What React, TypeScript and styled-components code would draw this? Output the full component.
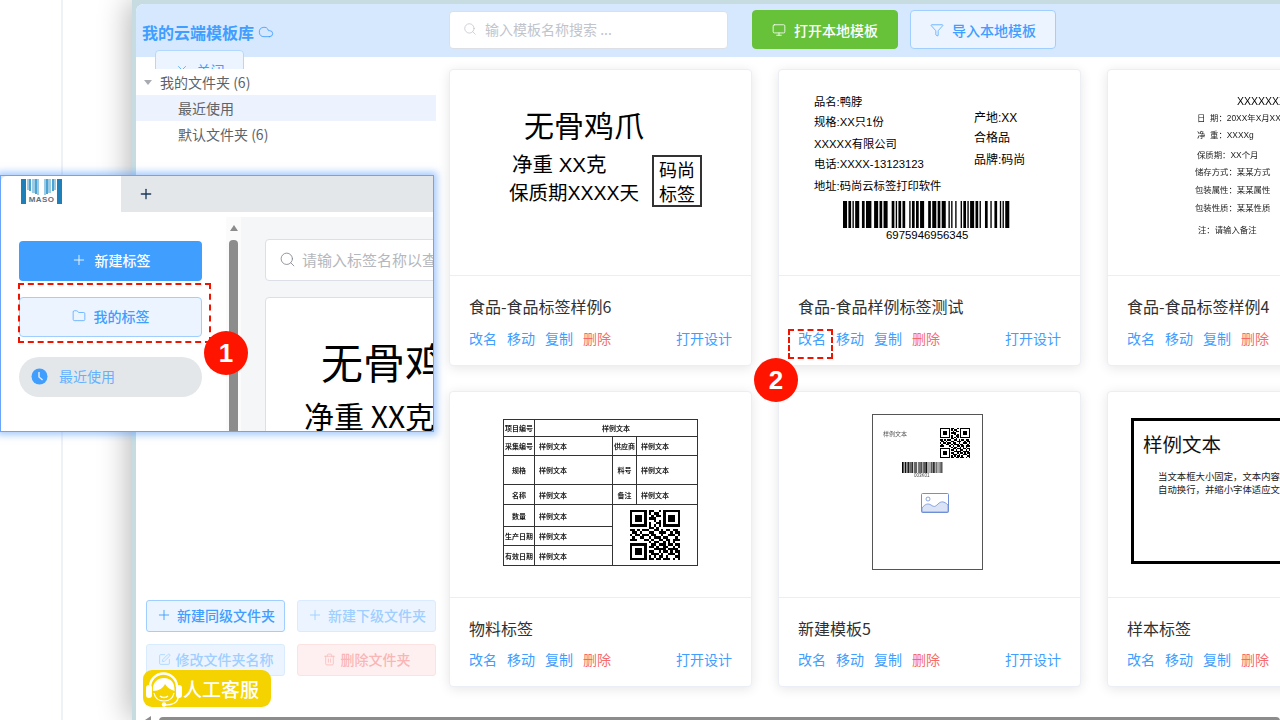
import type { ReactNode } from 'react';
import styled, { createGlobalStyle } from 'styled-components';
import { Cloud, Filter, Folder, Monitor, Plus, Search, SquarePen, Trash2, X } from 'lucide-react';

const GlobalStyle = createGlobalStyle`
  html, body {
    margin: 0;
    padding: 0;
    background: #ffffff;
    font-family: "Noto Sans CJK SC", "Noto Sans", sans-serif;
  }
  * {
    box-sizing: border-box;
  }
`;

const QR_ROWS = [
  '111111101100101111111',
  '100000101011001000001',
  '101110100101101011101',
  '101110101110001011101',
  '101110100010101011101',
  '100000101001101000001',
  '111111101010101111111',
  '000000001101000000000',
  '110101110011010110110',
  '011010001100111001011',
  '101101110110010011101',
  '010011001011101100010',
  '111000110100110110111',
  '000000001011001010100',
  '111111100110111011011',
  '100000101101001100101',
  '101110100011111011110',
  '101110101100101101011',
  '101110100111010011101',
  '100000101010110100011',
  '111111101101101110101',
];

const QrCode = ({ size }: { size: number }) => (
  <svg width={size} height={size} viewBox="0 0 21 21" shapeRendering="crispEdges">
    {QR_ROWS.flatMap((row, y) =>
      row.split('').map((cell, x) =>
        cell === '1' ? <rect key={`${x}-${y}`} x={x} y={y} width={1} height={1} fill="#000" /> : null,
      ),
    )}
  </svg>
);

const BAR_WIDTHS = [
  3, 1, 2, 1, 1, 1, 3, 2, 2, 1, 4, 2, 3, 1, 2, 1, 3, 3, 2, 1, 1, 1, 2, 1, 2, 3, 1, 1, 2, 1, 2, 1, 3, 3, 2, 1, 3, 1, 2,
  1, 3, 2, 1, 1, 1, 2, 1, 3, 1, 1, 2, 1, 1, 1, 3, 1, 2, 1, 1, 3, 2, 2, 1, 2, 2, 2, 1, 1, 1, 1, 3, 2,
];

const Barcode = ({ width, height }: { width: number; height: number }) => {
  const total = BAR_WIDTHS.reduce((sum, w) => sum + w, 0);
  let x = 0;
  return (
    <svg width={width} height={height} viewBox={`0 0 ${total} 10`} preserveAspectRatio="none">
      {BAR_WIDTHS.map((w, i) => {
        const bar = i % 2 === 0 ? <rect key={i} x={x} y={0} width={w} height={10} fill="#000" /> : null;
        x += w;
        return bar;
      })}
    </svg>
  );
};

const Logo = () => (
  <svg width="41" height="25" viewBox="0 0 41 25">
    <rect x="0" y="0" width="41" height="25" fill="#fff" />
    <rect x="0" y="0" width="5" height="25" fill="#1f7fb8" />
    <rect x="36" y="0" width="5" height="25" fill="#1f7fb8" />
    <path d="M6 0h2v11h-2zM11 0h3v14h-3zM16 0h2v16h-2zM23 0h2v16h-2zM27 0h3v14h-3zM33 0h2v11h-2z" fill="#9ccbe6" />
    <path d="M8 0h2v12h-2zM14 0h2v15h-2zM25 0h2v15h-2zM31 0h2v12h-2z" fill="#4ba3d3" />
    <text x="20.5" y="23" textAnchor="middle" fontSize="8" fontWeight="700" letterSpacing="0.4" fill="#5f6f7c" fontFamily="Liberation Sans">
      MASO
    </text>
  </svg>
);

const Headset = () => (
  <svg width="38" height="37" viewBox="0 0 38 37">
    <path d="M6 17a13.5 13.5 0 0 1 27 0" fill="none" stroke="#fff" strokeWidth="2.4" />
    <rect x="2" y="15" width="6" height="13" rx="3" fill="#fff" />
    <rect x="32" y="15" width="6" height="13" rx="3" fill="#fff" />
    <path d="M9 21C8 12 14 8 20 8c7 0 11 5 10.5 13-3-1-7-3-9.5-7-2 4-6 7-12 7z" fill="#fff" />
    <path d="M10 23c1 5 5 8 10 8s9-3 10-8" fill="none" stroke="#fff" strokeWidth="1.2" />
    <path d="M16 26c2 2 6 2 8 0" fill="none" stroke="#fff" strokeWidth="1.3" />
    <path d="M34 27c0 5-5 8-13 8" fill="none" stroke="#fff" strokeWidth="1.5" />
    <circle cx="20" cy="34.5" r="2.2" fill="#fff" />
  </svg>
);

const Page = styled.div`
  position: relative;
  display: flex;
  width: 1280px;
  height: 720px;
  overflow: hidden;
  background: #ffffff;
`;

const Rail = styled.div`
  flex: none;
  width: 132px;
`;

const RailColumn = styled.div`
  width: 63px;
  height: 100%;
  border-right: 2px solid #eef1f6;
`;

const Main = styled.div`
  position: relative;
  flex: 1;
  min-width: 0;
  padding: 4px 0 0 4px;
  background: #c6dce0;
  box-shadow: -4px 0 28px rgba(0, 0, 0, 0.28);
`;

const Panel = styled.div`
  position: relative;
  display: flex;
  flex-direction: column;
  height: 100%;
  overflow: hidden;
  background: #ffffff;
  border-radius: 8px 0 0 0;
`;

const Header = styled.header`
  flex: none;
  display: flex;
  align-items: center;
  height: 53px;
  padding-bottom: 2px;
  background: #d6e8fd;
`;

const TitleBlock = styled.div`
  display: flex;
  align-items: center;
  gap: 4px;
  width: 313px;
  padding: 5px 0 0 6px;
  color: #409eff;
  font-size: 16px;
  font-weight: 700;
`;

const SearchBox = styled.div`
  display: flex;
  align-items: center;
  gap: 8px;
  width: 279px;
  height: 38px;
  margin-right: 24px;
  padding: 0 0 2px 13px;
  background: #ffffff;
  border: 1px solid #dcdfe6;
  border-radius: 4px;
  color: #c0c4cc;
  font-size: 14px;
`;

const HeaderButton = styled.div<{ $green?: boolean }>`
  display: flex;
  align-items: center;
  justify-content: center;
  gap: 8px;
  width: 146px;
  height: 39px;
  margin-right: 12px;
  border-radius: 4px;
  border: 1px solid ${({ $green }) => ($green ? '#67c23a' : '#a0cfff')};
  background: ${({ $green }) => ($green ? '#67c23a' : '#ecf5ff')};
  color: ${({ $green }) => ($green ? '#ffffff' : '#409eff')};
  font-size: 14px;
  font-weight: 500;
`;

const CloseButton = styled.div`
  position: absolute;
  top: 46px;
  left: 19px;
  display: flex;
  align-items: center;
  justify-content: center;
  gap: 8px;
  width: 89px;
  height: 40px;
  background: #ecf5ff;
  border: 1px solid #b3d8ff;
  border-radius: 4px;
  color: #409eff;
  font-size: 14px;
`;

const Body = styled.div`
  flex: 1;
  min-height: 0;
  display: flex;
  padding-top: 12px;
`;

const Sidebar = styled.aside`
  position: relative;
  z-index: 1;
  flex: none;
  display: flex;
  flex-direction: column;
  justify-content: space-between;
  width: 300px;
  padding: 0 0 44px;
  background: #ffffff;
`;

const Tree = styled.div`
  display: flex;
  flex-direction: column;
`;

const TreeRow = styled.div<{ $child?: boolean; $active?: boolean }>`
  display: flex;
  align-items: center;
  gap: 8px;
  height: 26px;
  padding-left: ${({ $child }) => ($child ? '42px' : '8px')};
  background: ${({ $active }) => ($active ? '#ecf3fe' : 'transparent')};
  color: #606266;
  font-size: 14px;
`;

const Caret = styled.span`
  width: 0;
  height: 0;
  border-left: 4.5px solid transparent;
  border-right: 4.5px solid transparent;
  border-top: 5px solid #a8abb2;
`;

const FolderActions = styled.div`
  display: grid;
  grid-template-columns: 139px 139px;
  gap: 12px;
  padding-left: 10px;
`;

type Tone = 'primary' | 'muted' | 'danger';

const toneColors: Record<Tone, { bg: string; border: string; color: string }> = {
  primary: { bg: '#ecf5ff', border: '#a0cfff', color: '#409eff' },
  muted: { bg: '#ecf5ff', border: '#d9ecff', color: '#a0cfff' },
  danger: { bg: '#fef0f0', border: '#fde2e2', color: '#fab6b6' },
};

const FolderButton = styled.div<{ $tone: Tone }>`
  display: flex;
  align-items: center;
  justify-content: center;
  gap: 5px;
  height: 32px;
  padding-bottom: 2px;
  border-radius: 3px;
  border: 1px solid ${({ $tone }) => toneColors[$tone].border};
  background: ${({ $tone }) => toneColors[$tone].bg};
  color: ${({ $tone }) => toneColors[$tone].color};
  font-size: 14px;
  font-weight: 500;
`;

const ActionRow = styled.div`
  display: flex;
  gap: 10px;
  height: 20px;
  line-height: 20px;
  font-size: 14px;
`;

const CardGrid = styled.div`
  flex: none;
  display: grid;
  grid-template-columns: repeat(3, 303px);
  grid-template-rows: 297px 296px;
  column-gap: 26px;
  row-gap: 25px;
  margin-left: 13px;
`;

const Card = styled.article`
  display: flex;
  flex-direction: column;
  background: #ffffff;
  border: 1px solid #ebeef5;
  border-radius: 4px;
  box-shadow: 0 2px 12px rgba(0, 0, 0, 0.1);

  &:nth-child(n + 4) ${ActionRow} {
    margin-top: -1px;
  }
`;

const Preview = styled.div`
  flex: none;
  height: 207px;
  margin: -1px -1px 0;
  overflow: hidden;
  border-bottom: 1px solid #ebeef5;
`;

const Art = styled.div<{ $soft?: boolean }>`
  position: relative;
  height: 100%;
  filter: ${({ $soft }) => ($soft ? 'blur(0.35px)' : 'none')};
`;

const CardFooter = styled.div`
  display: flex;
  flex-direction: column;
  gap: 12px;
  padding: 20px 19px 0;
`;

const CardTitle = styled.div`
  height: 20px;
  line-height: 20px;
  color: #303133;
  font-size: 16px;
  white-space: nowrap;
`;

const ActionLink = styled.a<{ $danger?: boolean; $end?: boolean }>`
  color: ${({ $danger }) => ($danger ? '#f56c6c' : '#409eff')};
  margin-left: ${({ $end }) => ($end ? 'auto' : '0')};
  white-space: nowrap;
`;

/* text and marks on a label are placed on the label's own canvas */
const LabelText = styled.span<{ $x: number; $y: number; $size: number; $color?: string }>`
  position: absolute;
  left: ${({ $x }) => $x}px;
  top: ${({ $y }) => $y}px;
  transform: translateY(-50%);
  color: ${({ $color }) => $color ?? '#000000'};
  font-family: "Liberation Sans", "Noto Sans CJK SC", sans-serif;
  font-size: ${({ $size }) => $size}px;
  line-height: 1;
  white-space: nowrap;
`;

const LabelMark = styled.div<{ $x: number; $y: number }>`
  position: absolute;
  left: ${({ $x }) => $x}px;
  top: ${({ $y }) => $y}px;
  display: flex;
`;

const StampBox = styled.div`
  position: absolute;
  left: 203px;
  top: 86px;
  width: 50px;
  height: 52px;
  border: 2px solid #333333;
  color: #000000;
  font-size: 18px;
  line-height: 24px;
  text-align: center;
`;

const Paper = styled.div`
  position: absolute;
  left: 94px;
  top: 23px;
  width: 111px;
  height: 156px;
  border: 1px solid #555555;
`;

const FrameLabel = styled.div`
  position: absolute;
  left: 24px;
  top: 27px;
  width: 300px;
  height: 146px;
  border: 3px solid #000000;
`;

const SpecTable = styled.div`
  position: absolute;
  left: 54px;
  top: 28px;
  display: grid;
  grid-template-columns: 31px 78px 24px 61px;
  grid-template-rows: 17px 19px 29px 20px 22px 19px 20px;
  width: 195px;
  border-top: 1px solid #333333;
  border-left: 1px solid #333333;
  font-size: 7px;
  font-weight: 700;
  color: #222222;
`;

const SpecCell = styled.div<{ $span?: number; $rows?: number; $center?: boolean }>`
  display: flex;
  align-items: center;
  justify-content: ${({ $center }) => ($center ? 'center' : 'flex-start')};
  padding-left: ${({ $center }) => ($center ? '0' : '4px')};
  grid-column: span ${({ $span }) => $span ?? 1};
  grid-row: span ${({ $rows }) => $rows ?? 1};
  border-right: 1px solid #333333;
  border-bottom: 1px solid #333333;
  white-space: nowrap;
  overflow: hidden;
`;

const PreviewFood = () => (
  <>
    <LabelText $x={75} $y={58} $size={30}>无骨鸡爪</LabelText>
    <LabelText $x={63} $y={96} $size={20.5}>净重 XX克</LabelText>
    <LabelText $x={60} $y={125} $size={19.5}>保质期XXXX天</LabelText>
    <StampBox>码尚<br />标签</StampBox>
  </>
);

const PreviewDuck = () => (
  <>
    <LabelText $x={36} $y={34} $size={11.3}>品名:鸭脖</LabelText>
    <LabelText $x={36} $y={54} $size={11.3}>规格:XX只1份</LabelText>
    <LabelText $x={36} $y={76} $size={11.3}>XXXXX有限公司</LabelText>
    <LabelText $x={36} $y={96} $size={11.3}>电话:XXXX-13123123</LabelText>
    <LabelText $x={36} $y={118} $size={11.3}>地址:码尚云标签打印软件</LabelText>
    <LabelText $x={196} $y={49} $size={12}>产地:XX</LabelText>
    <LabelText $x={196} $y={69} $size={12}>合格品</LabelText>
    <LabelText $x={196} $y={91} $size={12}>品牌:码尚</LabelText>
    <LabelMark $x={65} $y={132}><Barcode width={169} height={27} /></LabelMark>
    <LabelText $x={108} $y={167} $size={11.4}>6975946956345</LabelText>
  </>
);

const PreviewSpec = () => (
  <>
    <LabelText $x={130} $y={32} $size={10.5}>XXXXXXXX</LabelText>
    <LabelText $x={90} $y={49} $size={8.4} $color="#222">日&nbsp;&nbsp;期：20XX年X月XX日</LabelText>
    <LabelText $x={90} $y={66} $size={8.4} $color="#222">净&nbsp;&nbsp;重：XXXXg</LabelText>
    <LabelText $x={90} $y={86} $size={8.4} $color="#222">保质期：XX个月</LabelText>
    <LabelText $x={88} $y={103} $size={8.4} $color="#222">储存方式：某某方式</LabelText>
    <LabelText $x={88} $y={121} $size={8.4} $color="#222">包装属性：某某属性</LabelText>
    <LabelText $x={88} $y={139} $size={8.4} $color="#222">包装性质：某某性质</LabelText>
    <LabelText $x={91} $y={161} $size={8.4} $color="#222">注：请输入备注</LabelText>
  </>
);

const PreviewMaterial = () => (
  <SpecTable>
    <SpecCell $center>项目编号</SpecCell>
    <SpecCell $span={3} $center>样例文本</SpecCell>
    <SpecCell $center>采集编号</SpecCell>
    <SpecCell>样例文本</SpecCell>
    <SpecCell $center>供应商</SpecCell>
    <SpecCell>样例文本</SpecCell>
    <SpecCell $center>规格</SpecCell>
    <SpecCell>样例文本</SpecCell>
    <SpecCell $center>料号</SpecCell>
    <SpecCell>样例文本</SpecCell>
    <SpecCell $center>名称</SpecCell>
    <SpecCell>样例文本</SpecCell>
    <SpecCell $center>备注</SpecCell>
    <SpecCell>样例文本</SpecCell>
    <SpecCell $center>数量</SpecCell>
    <SpecCell>样例文本</SpecCell>
    <SpecCell $span={2} $rows={3} $center><QrCode size={50} /></SpecCell>
    <SpecCell $center>生产日期</SpecCell>
    <SpecCell>样例文本</SpecCell>
    <SpecCell $center>有效日期</SpecCell>
    <SpecCell>样例文本</SpecCell>
  </SpecTable>
);

const PreviewTemplate = () => (
  <Paper>
    <LabelText $x={10} $y={19} $size={6} $color="#555">样例文本</LabelText>
    <LabelMark $x={67} $y={13}><QrCode size={30} /></LabelMark>
    <LabelMark $x={29} $y={47}><Barcode width={41} height={11} /></LabelMark>
    <LabelText $x={41} $y={61} $size={4.5} $color="#444">003K01</LabelText>
    <LabelMark $x={48} $y={78}>
      <svg width="28" height="20" viewBox="0 0 28 20">
        <rect x="0.5" y="0.5" width="27" height="19" rx="1" fill="#fff" stroke="#6f8fd8" />
        <path d="M1 15c3-4 6-5 9-3s4 2 7-1 6-3 10 1v7H1z" fill="#dbe4f6" stroke="#6f8fd8" strokeWidth="0.8" />
        <circle cx="7" cy="6" r="2" fill="#fff" stroke="#6f8fd8" strokeWidth="0.8" />
      </svg>
    </LabelMark>
  </Paper>
);

const PreviewSample = () => (
  <>
    <FrameLabel />
    <LabelText $x={36} $y={55} $size={19.5} $color="#111">样例文本</LabelText>
    <LabelText $x={51} $y={86} $size={9.4} $color="#222">当文本框大小固定，文本内容超出时</LabelText>
    <LabelText $x={51} $y={99} $size={9.4} $color="#222">自动换行，并缩小字体适应文本框</LabelText>
  </>
);

const TEMPLATES: { title: string; soft?: boolean; art: ReactNode }[] = [
  { title: '食品-食品标签样例6', art: <PreviewFood /> },
  { title: '食品-食品样例标签测试', art: <PreviewDuck /> },
  { title: '食品-食品标签样例4', soft: true, art: <PreviewSpec /> },
  { title: '物料标签', soft: true, art: <PreviewMaterial /> },
  { title: '新建模板5', soft: true, art: <PreviewTemplate /> },
  { title: '样本标签', art: <PreviewSample /> },
];

const ServiceBadge = styled.div`
  position: absolute;
  left: 143px;
  top: 670px;
  z-index: 3;
  display: flex;
  align-items: center;
  gap: 1px;
  width: 128px;
  height: 37px;
  padding-left: 1px;
  background: #f5d300;
  border-radius: 9px;
  color: #ffffff;
  font-size: 19px;
  font-weight: 500;
`;

const BottomScroll = styled.div`
  position: absolute;
  left: 159px;
  right: 0;
  top: 717px;
  height: 8px;
  z-index: 3;
  background: #8c8c8c;
  border-radius: 4px;
`;

const BottomArrow = styled.span`
  position: absolute;
  left: 145px;
  top: 716px;
  z-index: 3;
  width: 0;
  height: 0;
  border-top: 4px solid transparent;
  border-bottom: 4px solid transparent;
  border-right: 6px solid #8c8c8c;
`;

const Callout = styled.section`
  position: absolute;
  left: 0;
  top: 175px;
  z-index: 4;
  display: flex;
  flex-direction: column;
  width: 434px;
  height: 257px;
  overflow: hidden;
  background: #ffffff;
  border: 1px solid #6aa5f8;
  box-shadow: 0 0 7px 3px rgba(80, 150, 255, 0.5);
`;

const TabBar = styled.div`
  flex: none;
  display: flex;
  align-items: stretch;
  height: 36px;
  background: #e4e7ea;
`;

const Tab = styled.div`
  width: 120px;
  padding: 3px 0 0 20px;
  background: #ffffff;
  border-radius: 6px 0 0 0;
`;

const NewTab = styled.div`
  display: flex;
  align-items: center;
  padding-left: 17px;
  color: #1b3a5c;
`;

const WindowBody = styled.div`
  flex: 1;
  min-height: 0;
  display: flex;
  padding-top: 5px;
`;

const WindowSide = styled.div`
  flex: none;
  display: flex;
  flex-direction: column;
  width: 225px;
  padding: 24px 24px 0 18px;
`;

const SideButton = styled.div<{ $variant: 'solid' | 'plain' | 'pill' }>`
  display: flex;
  align-items: center;
  justify-content: ${({ $variant }) => ($variant === 'pill' ? 'flex-start' : 'center')};
  gap: ${({ $variant }) => ($variant === 'pill' ? '11px' : '8px')};
  height: 40px;
  margin-bottom: ${({ $variant }) => ($variant === 'solid' ? '16px' : $variant === 'plain' ? '20px' : '0')};
  padding: ${({ $variant }) => ($variant === 'pill' ? '0 0 2px 12px' : '0 0 2px')};
  border: ${({ $variant }) => ($variant === 'plain' ? '1px solid #a0cfff' : 'none')};
  border-radius: ${({ $variant }) => ($variant === 'pill' ? '20px' : '4px')};
  background: ${({ $variant }) => ($variant === 'solid' ? '#409eff' : $variant === 'plain' ? '#ecf5ff' : '#e4e7ea')};
  color: ${({ $variant }) => ($variant === 'solid' ? '#ffffff' : $variant === 'plain' ? '#409eff' : '#66b1ff')};
  font-size: 14px;
  font-weight: ${({ $variant }) => ($variant === 'pill' ? 400 : 500)};
`;

const ScrollTrack = styled.div`
  flex: none;
  display: flex;
  flex-direction: column;
  align-items: center;
  gap: 9px;
  width: 15px;
  padding-top: 8px;
  background: #fbfbfb;
`;

const ScrollUp = styled.span`
  width: 0;
  height: 0;
  border-left: 4.5px solid transparent;
  border-right: 4.5px solid transparent;
  border-bottom: 6px solid #8c8c8c;
`;

const ScrollThumb = styled.div`
  flex: 1;
  width: 9px;
  border-radius: 4px 4px 0 0;
  background: #8c8c8c;
`;

const WindowContent = styled.div`
  flex: 1;
  min-width: 0;
  padding: 22px 0 0 24px;
  background: #f5f6f8;
`;

const WindowSearch = styled.div`
  display: flex;
  align-items: center;
  gap: 6px;
  width: 300px;
  height: 42px;
  padding: 0 0 2px 13px;
  margin-bottom: 16px;
  background: #ffffff;
  border: 1px solid #dcdfe6;
  border-radius: 4px;
  color: #b4b7bd;
  font-size: 15px;
  white-space: nowrap;
`;

const WindowCard = styled.div`
  width: 300px;
  height: 200px;
  padding: 34px 0 0 55px;
  background: #ffffff;
  border: 1px solid #dcdfe6;
  border-radius: 4px;
  color: #000000;
  white-space: nowrap;
`;

const BigName = styled.div`
  font-size: 42px;
  line-height: 58px;
`;

const BigWeight = styled.div`
  margin: 7px 0 0 -17px;
  font-size: 30px;
  line-height: 36px;
`;

const DashedMark = styled.div<{ $x: number; $y: number; $w: number; $h: number }>`
  position: absolute;
  left: ${({ $x }) => $x}px;
  top: ${({ $y }) => $y}px;
  z-index: 5;
  width: ${({ $w }) => $w}px;
  height: ${({ $h }) => $h}px;
  border: 2px dashed #f01400;
`;

const StepBadge = styled.div<{ $x: number; $y: number }>`
  position: absolute;
  left: ${({ $x }) => $x}px;
  top: ${({ $y }) => $y}px;
  z-index: 6;
  display: flex;
  align-items: center;
  justify-content: center;
  width: 44px;
  height: 44px;
  border-radius: 50%;
  background: #ff1400;
  color: #ffffff;
  font-family: "Liberation Sans", sans-serif;
  font-size: 26px;
  font-weight: 700;
`;

const ClockDot = () => (
  <svg width="17" height="17" viewBox="0 0 17 17">
    <circle cx="8.5" cy="8.5" r="8" fill="#409eff" />
    <path d="M8 4v5l3.6 3" fill="none" stroke="#e4e7ea" strokeWidth="1.5" />
  </svg>
);

export default function App() {
  return (
    <>
      <GlobalStyle />
      <Page>
        <Rail>
          <RailColumn />
        </Rail>
        <Main>
          <Panel>
            <Header>
              <TitleBlock>
                我的云端模板库
                <Cloud size={16} strokeWidth={1.3} />
              </TitleBlock>
              <SearchBox>
                <Search size={14} strokeWidth={1.3} />
                输入模板名称搜索 ...
              </SearchBox>
              <HeaderButton $green>
                <Monitor size={14} strokeWidth={1.4} />
                打开本地模板
              </HeaderButton>
              <HeaderButton>
                <Filter size={14} strokeWidth={1.2} />
                导入本地模板
              </HeaderButton>
            </Header>
            <Body>
              <Sidebar>
                <Tree>
                  <TreeRow>
                    <Caret />
                    我的文件夹 (6)
                  </TreeRow>
                  <TreeRow $child $active>最近使用</TreeRow>
                  <TreeRow $child>默认文件夹 (6)</TreeRow>
                </Tree>
                <FolderActions>
                  <FolderButton $tone="primary"><Plus size={16} strokeWidth={1.4} />新建同级文件夹</FolderButton>
                  <FolderButton $tone="muted"><Plus size={16} strokeWidth={1.4} />新建下级文件夹</FolderButton>
                  <FolderButton $tone="muted"><SquarePen size={13} strokeWidth={1.4} />修改文件夹名称</FolderButton>
                  <FolderButton $tone="danger"><Trash2 size={13} strokeWidth={1.4} />删除文件夹</FolderButton>
                </FolderActions>
              </Sidebar>
              <CardGrid>
                {TEMPLATES.map((item) => (
                  <Card key={item.title}>
                    <Preview>
                      <Art $soft={item.soft}>{item.art}</Art>
                    </Preview>
                    <CardFooter>
                      <CardTitle>{item.title}</CardTitle>
                      <ActionRow>
                        <ActionLink>改名</ActionLink>
                        <ActionLink>移动</ActionLink>
                        <ActionLink>复制</ActionLink>
                        <ActionLink $danger>删除</ActionLink>
                        <ActionLink $end>打开设计</ActionLink>
                      </ActionRow>
                    </CardFooter>
                  </Card>
                ))}
              </CardGrid>
            </Body>
            <CloseButton>
              <X size={14} strokeWidth={1.3} />
              关闭
            </CloseButton>
          </Panel>
        </Main>

        <ServiceBadge>
          <Headset />
          人工客服
        </ServiceBadge>
        <BottomArrow />
        <BottomScroll />

        <Callout>
          <TabBar>
            <Tab><Logo /></Tab>
            <NewTab><Plus size={16} strokeWidth={2} /></NewTab>
          </TabBar>
          <WindowBody>
            <WindowSide>
              <SideButton $variant="solid"><Plus size={16} strokeWidth={1.3} />新建标签</SideButton>
              <SideButton $variant="plain"><Folder size={14} strokeWidth={1.2} />我的标签</SideButton>
              <SideButton $variant="pill"><ClockDot />最近使用</SideButton>
            </WindowSide>
            <ScrollTrack>
              <ScrollUp />
              <ScrollThumb />
            </ScrollTrack>
            <WindowContent>
              <WindowSearch>
                <Search size={17} strokeWidth={1.3} color="#8c8f96" />
                请输入标签名称以查询
              </WindowSearch>
              <WindowCard>
                <BigName>无骨鸡爪</BigName>
                <BigWeight>净重 XX克</BigWeight>
              </WindowCard>
            </WindowContent>
          </WindowBody>
        </Callout>
        <DashedMark $x={18} $y={283} $w={193} $h={60} />
        <DashedMark $x={788} $y={329} $w={45} $h={30} />
        <StepBadge $x={204} $y={331}>1</StepBadge>
        <StepBadge $x={754} $y={358}>2</StepBadge>
      </Page>
    </>
  );
}
